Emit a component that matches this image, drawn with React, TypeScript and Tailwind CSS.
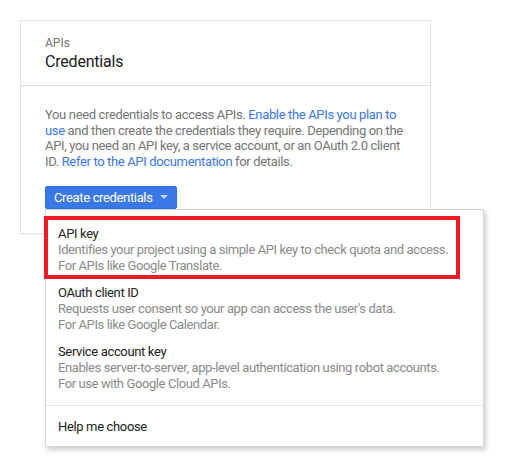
import React from "react";

const options = [
  {
    title: "API key",
    lines: [
      "Identifies your project using a simple API key to check quota and access.",
      "For APIs like Google Translate.",
    ],
  },
  {
    title: "OAuth client ID",
    lines: [
      "Requests user consent so your app can access the user's data.",
      "For APIs like Google Calendar.",
    ],
  },
  {
    title: "Service account key",
    lines: [
      "Enables server-to-server, app-level authentication using robot accounts.",
      "For use with Google Cloud APIs.",
    ],
  },
];

const App = () => {
  return (
    <div
      className="w-[506px] h-[460px] bg-white pt-5 pl-5 text-[13px] tracking-[-0.35px]"
      style={{ fontFamily: "Roboto, 'Liberation Sans', sans-serif" }}
    >
      {/* Credentials card */}
      <div className="w-[411px] border border-[#e3e3e3] bg-white shadow-[0_1px_1px_rgba(0,0,0,0.04)]">
        <div className="px-6 pt-[14px] pb-[12px] border-b border-[#dcdcdc]">
          <div className="text-[12px] leading-4 text-[#757575] tracking-normal">APIs</div>
          <div className="text-[16px] leading-[22px] text-[#212121] tracking-[-0.2px]">Credentials</div>
        </div>

        <div className="px-6 pt-[21px] pb-6 relative">
          <p className="leading-[15.7px] text-[#757575] w-[364px]">
            You need credentials to access APIs.{" "}
            <a className="text-[#3b78e7]">Enable the APIs you plan to use</a> and then
            create the credentials they require. Depending on the API, you need an API
            key, a service account, or an OAuth 2.0 client ID.{" "}
            <a className="text-[#3b78e7]">Refer to the API documentation</a> for details.
          </p>

          <div className="mt-[16px] relative">
            <button className="h-[23px] flex items-center gap-[7px] pl-2 pr-[8px] rounded-[2px] bg-[#3b78e7] border border-[#2f6de1] text-white leading-none">
              <span>Create credentials</span>
              <svg width="8" height="4" viewBox="0 0 8 4">
                <path d="M0 0 L8 0 L4 4 Z" fill="#c6d8f8" />
              </svg>
            </button>

            {/* Dropdown menu */}
            <div className="absolute left-0 top-[23px] w-[439px] z-10 bg-white border border-[#d6d6d6] shadow-[2px_3px_5px_rgba(0,0,0,0.2)]">
              <div className="relative pt-[10px] pb-2">
                {options.map((item) => (
                  <div key={item.title} className="px-3 py-[5px]">
                    <div className="leading-[17px] text-[#212121]">{item.title}</div>
                    {item.lines.map((l) => (
                      <div key={l} className="leading-4 text-[#8a8a8a] whitespace-nowrap tracking-[-0.4px]">
                        {l}
                      </div>
                    ))}
                  </div>
                ))}

                {/* highlight annotation */}
                <div className="absolute left-[-2px] top-[6px] w-[416px] h-[63px] border-4 border-[#ed1c24]" />
              </div>
              <div className="border-t border-[#e5e5e5] px-3 pt-[13px] pb-[11px] leading-4 text-[#212121]">
                Help me choose
              </div>
            </div>
          </div>
        </div>
      </div>
    </div>
  );
};

export default App;
